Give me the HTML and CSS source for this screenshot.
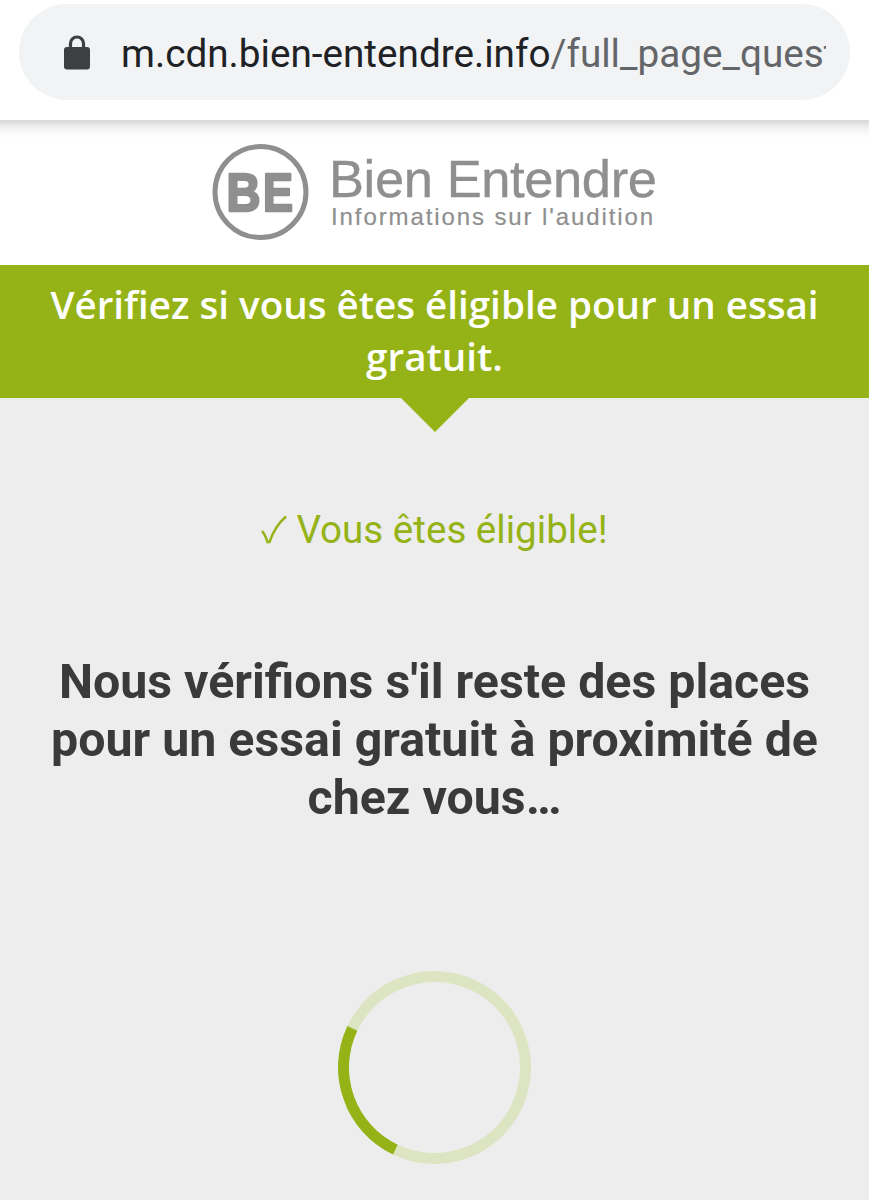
FILE: index.html
```
<!DOCTYPE html>
<html lang="fr">
<head>
<meta charset="utf-8">
<meta name="viewport" content="width=device-width, initial-scale=1.0">
<title>Bien Entendre</title>
<link rel="stylesheet" href="styles.css">
</head>
<body>

<div class="toolbar">
	<div class="address">
		<svg class="lock" width="26" height="35" viewBox="0 0 26 35">
			<path d="M6.500 14V8.500a6.500 6.500 0 0 1 13 0V14" fill="none" stroke="#3c4043" stroke-width="3.200"/>
			<rect x="0" y="12" width="26" height="22.500" rx="3" fill="#3c4043"/>
		</svg>
		<div class="url">m.cdn.bien-entendre.info<span class="path">/full_page_quest</span></div>
	</div>
</div>

<header class="header">
	<svg class="badge" width="98" height="98" viewBox="0 0 98 98">
		<circle cx="48.500" cy="49" r="45.500" fill="none" stroke="#8f8f8f" stroke-width="5"/>
		<text class="initials" x="14.500" y="67.500" textLength="34" lengthAdjust="spacingAndGlyphs">B</text>
		<text class="initials" x="51" y="67.500" textLength="30" lengthAdjust="spacingAndGlyphs">E</text>
	</svg>
	<div class="brand">
		<div class="name">Bien Entendre</div>
		<div class="tagline">Informations sur l'audition</div>
	</div>
</header>

<div class="banner">Vérifiez si vous êtes éligible pour un essai gratuit.</div>

<main class="content">
	<p class="eligible">
		<svg class="check" width="26" height="30" viewBox="0 0 26 30">
			<path d="M1 16Q4.500 20 6.500 27H8.500Q14 11 25 1.500" fill="none" stroke="#95b316" stroke-width="2.400"/>
		</svg>
		<span>Vous êtes éligible!</span>
	</p>
	<h1 class="title">Nous vérifions s'il reste des places pour un essai gratuit à proximité de chez vous…</h1>
	<div class="loader"></div>
</main>

</body>
</html>
```
FILE: styles.css
```
* {
	box-sizing: border-box;
}

body {
	margin: 0;
	background: #ededed;
	font-family: Roboto, sans-serif;
	overflow: hidden;
}

.toolbar {
	height: 120px;
	padding: 4px 19px 0;
	background: #fff;
}

.address {
	display: flex;
	align-items: center;
	height: 96px;
	padding: 0 24px 0 45px;
	border-radius: 48px;
	background: #f1f3f4;
}

.lock {
	flex: none;
	margin-right: 31px;
}

.url {
	flex: 1;
	overflow: hidden;
	padding-top: 3px;
	white-space: nowrap;
	font-size: 38.7px;
	line-height: 60px;
	color: #202124;
}

.path {
	color: #646569;
}

.header {
	display: flex;
	height: 145px;
	padding: 23px 0 0 212px;
	background: linear-gradient(#d6d6d6, #ececec 6px, #fafafa 13px, #fff 18px);
}

.badge {
	flex: none;
}

.initials {
	font: bold 53px "Liberation Sans", Arial, sans-serif;
	fill: #8f8f8f;
	stroke: #8f8f8f;
	stroke-width: 2.5px;
	stroke-linejoin: round;
}

.brand {
	padding: 9px 0 0 19px;
	font-family: "Liberation Sans", Arial, sans-serif;
	color: #8f8f8f;
	white-space: nowrap;
}

.name {
	font-size: 52.5px;
	line-height: 54px;
	letter-spacing: -0.4px;
	-webkit-text-stroke: 0.4px #8f8f8f;
}

.tagline {
	padding-left: 2px;
	font-size: 24px;
	line-height: 22px;
	letter-spacing: 1.9px;
	-webkit-text-stroke: 0.2px #8f8f8f;
}

.banner {
	height: 133px;
	padding: 13px 40px 0;
	background: #95b316;
	color: #fff;
	font: 600 38.6px/52px "Open Sans", sans-serif;
	text-align: center;
}

.content {
	display: flex;
	flex-direction: column;
	align-items: center;
}

.content:before {
	content: "";
	border: 34px solid transparent;
	border-top-color: #95b316;
	border-bottom: 0;
}

.eligible {
	display: flex;
	align-items: center;
	gap: 9px;
	margin: 73px 0 0;
	font-size: 38.6px;
	line-height: 50px;
	color: #95b316;
}

.title {
	width: 800px;
	margin: 98px 0 0;
	font-size: 48.3px;
	line-height: 58px;
	font-weight: bold;
	text-align: center;
	color: #3a3a3a;
}

.loader {
	width: 193px;
	height: 193px;
	margin-top: 144px;
	border: 11px solid #dde4c1;
	border-left-color: #95b316;
	border-radius: 50%;
	transform: rotate(-19.5deg);
}
```
